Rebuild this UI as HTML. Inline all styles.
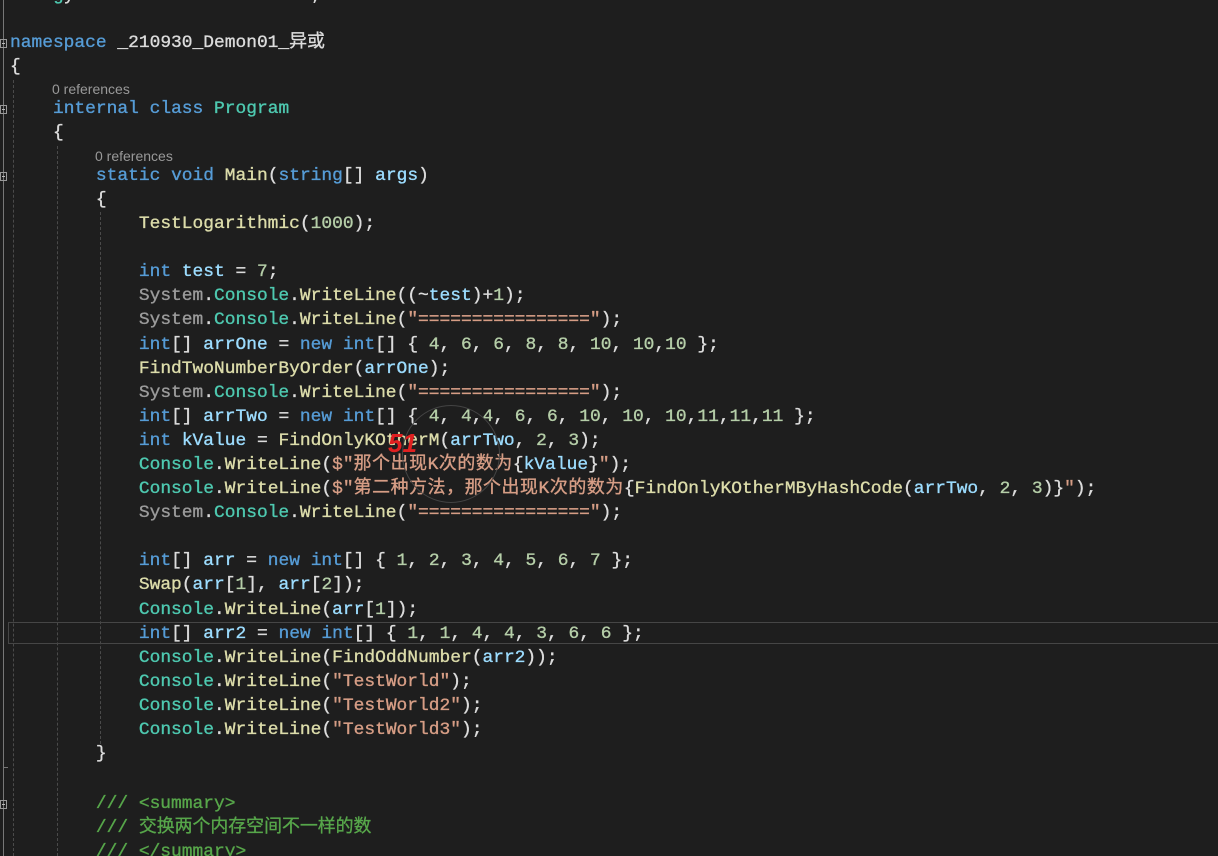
<!DOCTYPE html>
<html><head><meta charset="utf-8"><style>
html,body{margin:0;width:1218px;height:856px;overflow:hidden}
body{background:#1e1e1e;position:relative;font-family:"Liberation Mono","Noto Sans CJK SC",monospace;font-size:17.9px;color:#dcdcdc}
.l{position:absolute;left:10px;height:24px;line-height:24px;white-space:pre;-webkit-text-stroke:0.35px currentColor}
.r{position:absolute;font-family:"Liberation Sans",sans-serif;font-size:14px;color:#999;line-height:18px}
.k{color:#569cd6}.t{color:#4ec9b0}.m{color:#dcdcaa}.v{color:#9cdcfe}.s{color:#d69d85}.n{color:#b5cea8}.c{color:#57a64a}.g{color:#9b9b9b}
.cj{letter-spacing:0.6px}
.guide{position:absolute;width:0;border-left:1px dashed #4a4a4a}
.fold{position:absolute;left:0;width:7px;height:9px;border:1px solid #999;box-sizing:border-box}
.fold:after{content:"";position:absolute;left:1px;top:3px;width:3px;height:1px;background:#bbb}
</style></head><body>
<div style="position:absolute;left:3px;top:0;width:1px;height:856px;background:#777"></div>
<div class="fold" style="top:39px"></div>
<div class="fold" style="top:105px"></div>
<div class="fold" style="top:172px"></div>
<div class="fold" style="top:800px"></div>
<div style="position:absolute;left:3px;top:767px;width:5px;height:1px;background:#777"></div>
<div class="guide" style="left:13px;top:80px;height:776px"></div>
<div class="guide" style="left:57px;top:146px;height:710px"></div>
<div class="guide" style="left:100px;top:212px;height:532px"></div>
<div style="position:absolute;left:8px;top:622px;width:1212px;height:22px;border:1px solid #464646;box-sizing:border-box"></div>

<div class="l" style="top:-16px">    <span class="t">g</span>y                      ;</div>
<div class="l" style="top:31px"><span class="k">namespace</span> _210930_Demon01_异或</div>
<div class="l" style="top:55px">{</div>
<div class="r" style="left:52px;top:80px">0 references</div>
<div class="l" style="top:97px">    <span class="k">internal</span> <span class="k">class</span> <span class="t">Program</span></div>
<div class="l" style="top:121px">    {</div>
<div class="r" style="left:95px;top:147px">0 references</div>
<div class="l" style="top:164px">        <span class="k">static</span> <span class="k">void</span> <span class="m">Main</span>(<span class="k">string</span>[] <span class="v">args</span>)</div>
<div class="l" style="top:188px">        {</div>
<div class="l" style="top:212px">            <span class="m">TestLogarithmic</span>(<span class="n">1000</span>);</div>
<div class="l" style="top:260px">            <span class="k">int</span> <span class="v">test</span> = <span class="n">7</span>;</div>
<div class="l" style="top:284px">            <span class="g">System</span>.<span class="t">Console</span>.<span class="m">WriteLine</span>((~<span class="v">test</span>)+<span class="n">1</span>);</div>
<div class="l" style="top:308px">            <span class="g">System</span>.<span class="t">Console</span>.<span class="m">WriteLine</span>(<span class="s">"================"</span>);</div>
<div class="l" style="top:333px">            <span class="k">int</span>[] <span class="v">arrOne</span> = <span class="k">new</span> <span class="k">int</span>[] { <span class="n">4</span>, <span class="n">6</span>, <span class="n">6</span>, <span class="n">8</span>, <span class="n">8</span>, <span class="n">10</span>, <span class="n">10</span>,<span class="n">10</span> };</div>
<div class="l" style="top:357px">            <span class="m">FindTwoNumberByOrder</span>(<span class="v">arrOne</span>);</div>
<div class="l" style="top:381px">            <span class="g">System</span>.<span class="t">Console</span>.<span class="m">WriteLine</span>(<span class="s">"================"</span>);</div>
<div class="l" style="top:405px">            <span class="k">int</span>[] <span class="v">arrTwo</span> = <span class="k">new</span> <span class="k">int</span>[] { <span class="n">4</span>, <span class="n">4</span>,<span class="n">4</span>, <span class="n">6</span>, <span class="n">6</span>, <span class="n">10</span>, <span class="n">10</span>, <span class="n">10</span>,<span class="n">11</span>,<span class="n">11</span>,<span class="n">11</span> };</div>
<div class="l" style="top:429px">            <span class="k">int</span> <span class="v">kValue</span> = <span class="m">FindOnlyKOtherM</span>(<span class="v">arrTwo</span>, <span class="n">2</span>, <span class="n">3</span>);</div>
<div class="l" style="top:453px">            <span class="t">Console</span>.<span class="m">WriteLine</span>(<span class="s">$"<span class="cj">那个出现K次的数为</span></span>{<span class="v">kValue</span>}<span class="s">"</span>);</div>
<div class="l" style="top:477px">            <span class="t">Console</span>.<span class="m">WriteLine</span>(<span class="s">$"<span class="cj">第二种方法，那个出现K次的数为</span></span>{<span class="m">FindOnlyKOtherMByHashCode</span>(<span class="v">arrTwo</span>, <span class="n">2</span>, <span class="n">3</span>)}<span class="s">"</span>);</div>
<div class="l" style="top:501px">            <span class="g">System</span>.<span class="t">Console</span>.<span class="m">WriteLine</span>(<span class="s">"================"</span>);</div>
<div class="l" style="top:549px">            <span class="k">int</span>[] <span class="v">arr</span> = <span class="k">new</span> <span class="k">int</span>[] { <span class="n">1</span>, <span class="n">2</span>, <span class="n">3</span>, <span class="n">4</span>, <span class="n">5</span>, <span class="n">6</span>, <span class="n">7</span> };</div>
<div class="l" style="top:573px">            <span class="m">Swap</span>(<span class="v">arr</span>[<span class="n">1</span>], <span class="v">arr</span>[<span class="n">2</span>]);</div>
<div class="l" style="top:598px">            <span class="t">Console</span>.<span class="m">WriteLine</span>(<span class="v">arr</span>[<span class="n">1</span>]);</div>
<div class="l" style="top:622px">            <span class="k">int</span>[] <span class="v">arr2</span> = <span class="k">new</span> <span class="k">int</span>[] { <span class="n">1</span>, <span class="n">1</span>, <span class="n">4</span>, <span class="n">4</span>, <span class="n">3</span>, <span class="n">6</span>, <span class="n">6</span> };</div>
<div class="l" style="top:646px">            <span class="t">Console</span>.<span class="m">WriteLine</span>(<span class="m">FindOddNumber</span>(<span class="v">arr2</span>));</div>
<div class="l" style="top:670px">            <span class="t">Console</span>.<span class="m">WriteLine</span>(<span class="s">"TestWorld"</span>);</div>
<div class="l" style="top:694px">            <span class="t">Console</span>.<span class="m">WriteLine</span>(<span class="s">"TestWorld2"</span>);</div>
<div class="l" style="top:718px">            <span class="t">Console</span>.<span class="m">WriteLine</span>(<span class="s">"TestWorld3"</span>);</div>
<div class="l" style="top:742px">        }</div>
<div class="l" style="top:792px">        <span class="c">/// &lt;summary&gt;</span></div>
<div class="l" style="top:816px">        <span class="c">/// 交换两个内存空间不一样的数</span></div>
<div class="l" style="top:840px">        <span class="c">/// &lt;/summary&gt;</span></div>
<div style="position:absolute;left:402px;top:405px;width:96px;height:96px;border:1px solid #444;border-radius:50%"></div>
<div style="position:absolute;left:388px;top:428px;color:#e02020;font:bold italic 26px 'Liberation Sans',sans-serif">51</div>
</body></html>
